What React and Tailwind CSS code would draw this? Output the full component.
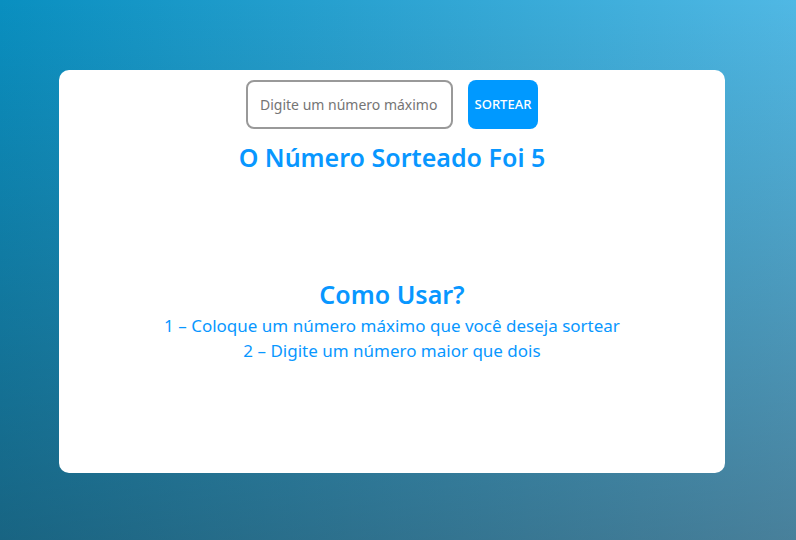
import { useState } from "react";

const steps = [
  "1 – Coloque um número máximo que você deseja sortear",
  "2 – Digite um número maior que dois",
];

export default function App() {
  const [max, setMax] = useState("");
  const [drawn, setDrawn] = useState(5);

  function draw(event) {
    event.preventDefault();
    const limit = Number(max);
    if (limit > 2) setDrawn(Math.floor(Math.random() * limit) + 1);
  }

  return (
    <div className="flex min-h-screen items-center justify-center bg-[linear-gradient(to_bottom,rgba(56,6,0,0),rgba(56,10,0,0.32)),linear-gradient(to_right,#098fc0,#50b8e4)] pt-[3px] pr-3 font-['Noto_Sans','Open_Sans',sans-serif] text-[#0897ff]">
      <main className="flex min-h-[calc(75vh-2px)] w-[85%] flex-col items-center rounded-[10px] bg-white px-4 py-2.5 text-center">
        <form onSubmit={draw} className="flex justify-center gap-[15px]">
          <input
            type="text"
            inputMode="numeric"
            aria-label="Número máximo"
            placeholder="Digite um número máximo"
            value={max}
            onChange={(event) => setMax(event.target.value)}
            className="h-[49px] w-[207px] rounded-lg border-2 border-[#999999] px-3 text-[14px] text-[#757575] outline-none placeholder:text-[#757575]"
          />
          <button
            type="submit"
            className="h-[49px] w-[70px] rounded-lg bg-[#0099ff] text-[13px] font-medium text-white"
          >
            SORTEAR
          </button>
        </form>
        <h1 className="mt-3 text-[25px] leading-8 font-semibold">
          O Número Sorteado Foi {drawn}
        </h1>
        <section className="mt-[105px]">
          <h2 className="text-[25px] leading-8 font-semibold">Como Usar?</h2>
          <div className="mt-[3px] text-[17px] leading-[25px]">
            {steps.map((step) => (
              <p key={step}>{step}</p>
            ))}
          </div>
        </section>
      </main>
    </div>
  );
}
